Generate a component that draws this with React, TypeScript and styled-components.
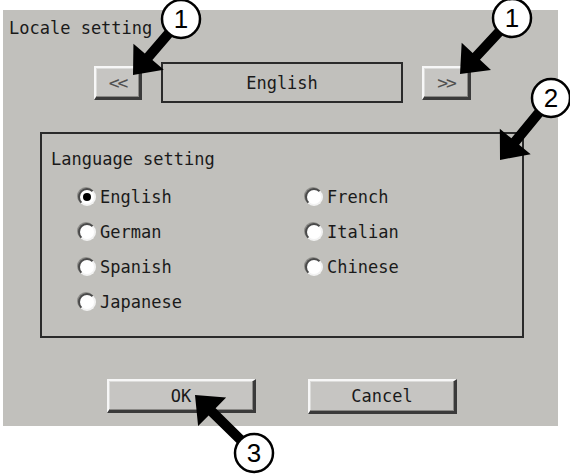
import * as React from "react";
import styled, { createGlobalStyle } from "styled-components";

const GlobalStyle = createGlobalStyle`
    html, body {
        margin: 0;
        padding: 0;
        background: #ffffff;
    }
    body {
        font-family: "DejaVu Sans Mono", "Liberation Mono", monospace;
        color: #1a1a1a;
    }
`;

const Page = styled.div`
    position: relative;
    width: 570px;
    height: 474px;
    overflow: hidden;
`;
const Panel = styled.div`
    box-sizing: border-box;
    width: 555px;
    height: 416px;
    margin: 10px 0 0 3px;
    padding: 8px 0 0 6px;
    background: #c1c0bc;
    display: flex;
    flex-direction: column;
`;
const Title = styled.div`
    font-size: 17px;
    line-height: 20px;
    height: 20px;
`;
const NavRow = styled.div`
    display: flex;
    align-items: center;
    gap: 19px;
    margin: 24px 0 0 85px;
`;
const RaisedButton = styled.button<{ $w: number; $h: number }>`
    box-sizing: border-box;
    width: ${p => p.$w}px;
    height: ${p => p.$h}px;
    padding: 0;
    background: #c6c5c2;
    border-style: solid;
    border-width: 2px 3px 3px 2px;
    border-color: #f7f7f7 #3a3a3a #3a3a3a #f7f7f7;
    box-shadow: inset -1px -1px 0 #8a8986, inset 1px 1px 0 #dcdcda;
    font-family: "DejaVu Sans Mono", "Liberation Mono", monospace;
    color: #1a1a1a;
    display: flex;
    align-items: center;
    justify-content: center;
`;
const NavButton = styled(RaisedButton)`
    font-size: 18px;
    color: #505050;
    letter-spacing: -2px;
`;
const ValueField = styled.div`
    box-sizing: border-box;
    width: 242px;
    height: 41px;
    border: 2px solid #2a2a2a;
    display: flex;
    align-items: center;
    justify-content: center;
    font-size: 17px;
`;
const GroupBox = styled.div`
    box-sizing: border-box;
    width: 484px;
    height: 206px;
    margin: 29px 0 0 31px;
    border: 2px solid #2a2a2a;
    padding: 15px 0 0 9px;
`;
const GroupTitle = styled.div`
    font-size: 17px;
    line-height: 20px;
`;
const RadioGrid = styled.div`
    display: grid;
    grid-template-columns: 227px auto;
    grid-auto-rows: 35px;
    margin: 10px 0 0 27px;
`;
const RadioItem = styled.label`
    display: flex;
    align-items: center;
    gap: 4px;
    font-size: 17px;
`;
const RadioDot = styled.span<{ $on: boolean }>`
    position: relative;
    box-sizing: border-box;
    width: 18px;
    height: 18px;
    border-radius: 50%;
    background: #ffffff;
    border: 2px solid;
    border-color: #4a4a4a #f2f2f2 #f2f2f2 #4a4a4a;
    box-shadow: -1px -1px 0 #8c8b88;
    &::after {
        content: "";
        display: ${p => (p.$on ? "block" : "none")};
        position: absolute;
        left: 3px;
        top: 3px;
        width: 8px;
        height: 8px;
        border-radius: 50%;
        background: #000000;
    }
`;
const ButtonRow = styled.div`
    display: flex;
    gap: 52px;
    margin: 41px 0 0 98px;
`;
const DialogButton = styled(RaisedButton)`
    font-size: 17px;
`;
const Callouts = styled.svg`
    position: absolute;
    left: 0;
    top: 0;
    pointer-events: none;
`;

const languages = [
    "English", "French",
    "German", "Italian",
    "Spanish", "Chinese",
    "Japanese",
];

interface CalloutProps {
    cx: number;
    cy: number;
    tx: number;
    ty: number;
    label: string;
}
const arrowPoints = (sx: number, sy: number, tx: number, ty: number) => {
    const len = Math.hypot(tx - sx, ty - sy);
    const dx = (tx - sx) / len;
    const dy = (ty - sy) / len;
    const nx = -dy;
    const ny = dx;
    const w = 5;
    const hw = 20;
    const hl = 24;
    const bx = tx - dx * hl;
    const by = ty - dy * hl;
    const pts = [
        [sx + nx * w, sy + ny * w],
        [bx + nx * w, by + ny * w],
        [bx + nx * hw, by + ny * hw],
        [tx, ty],
        [bx - nx * hw, by - ny * hw],
        [bx - nx * w, by - ny * w],
        [sx - nx * w, sy - ny * w],
    ];
    return pts.map(p => p.join(",")).join(" ");
};
const Callout = (props: CalloutProps) => (
    <g>
        <polygon points={arrowPoints(props.cx, props.cy, props.tx, props.ty)} fill="#000" />
        <circle cx={props.cx} cy={props.cy} r={19} fill="#fff" stroke="#000" strokeWidth={2.5} />
        <text
            x={props.cx}
            y={props.cy + 9}
            textAnchor="middle"
            fontFamily="Liberation Sans, Arial, sans-serif"
            fontSize={26}
            fill="#000"
        >
            {props.label}
        </text>
    </g>
);

const App = () => {
    const [selected, setSelected] = React.useState("English");
    return (
        <Page>
            <GlobalStyle />
            <Panel>
                <Title>Locale setting</Title>
                <NavRow>
                    <NavButton $w={48} $h={34}>&lt;&lt;</NavButton>
                    <ValueField>{selected}</ValueField>
                    <NavButton $w={49} $h={34}>&gt;&gt;</NavButton>
                </NavRow>
                <GroupBox>
                    <GroupTitle>Language setting</GroupTitle>
                    <RadioGrid>
                        {languages.map(lang => (
                            <RadioItem key={lang} onClick={() => setSelected(lang)}>
                                <RadioDot $on={selected === lang} />
                                {lang}
                            </RadioItem>
                        ))}
                    </RadioGrid>
                </GroupBox>
                <ButtonRow>
                    <DialogButton $w={149} $h={34}>OK</DialogButton>
                    <DialogButton $w={149} $h={35}>Cancel</DialogButton>
                </ButtonRow>
            </Panel>
            <Callouts width={570} height={474} viewBox="0 0 570 474">
                <Callout cx={181} cy={19} tx={133} ty={75} label="1" />
                <Callout cx={512} cy={18} tx={460} ty={74} label="1" />
                <Callout cx={551} cy={98} tx={500} ty={160} label="2" />
                <Callout cx={254} cy={453} tx={195} ty={395} label="3" />
            </Callouts>
        </Page>
    );
};
export default App;
